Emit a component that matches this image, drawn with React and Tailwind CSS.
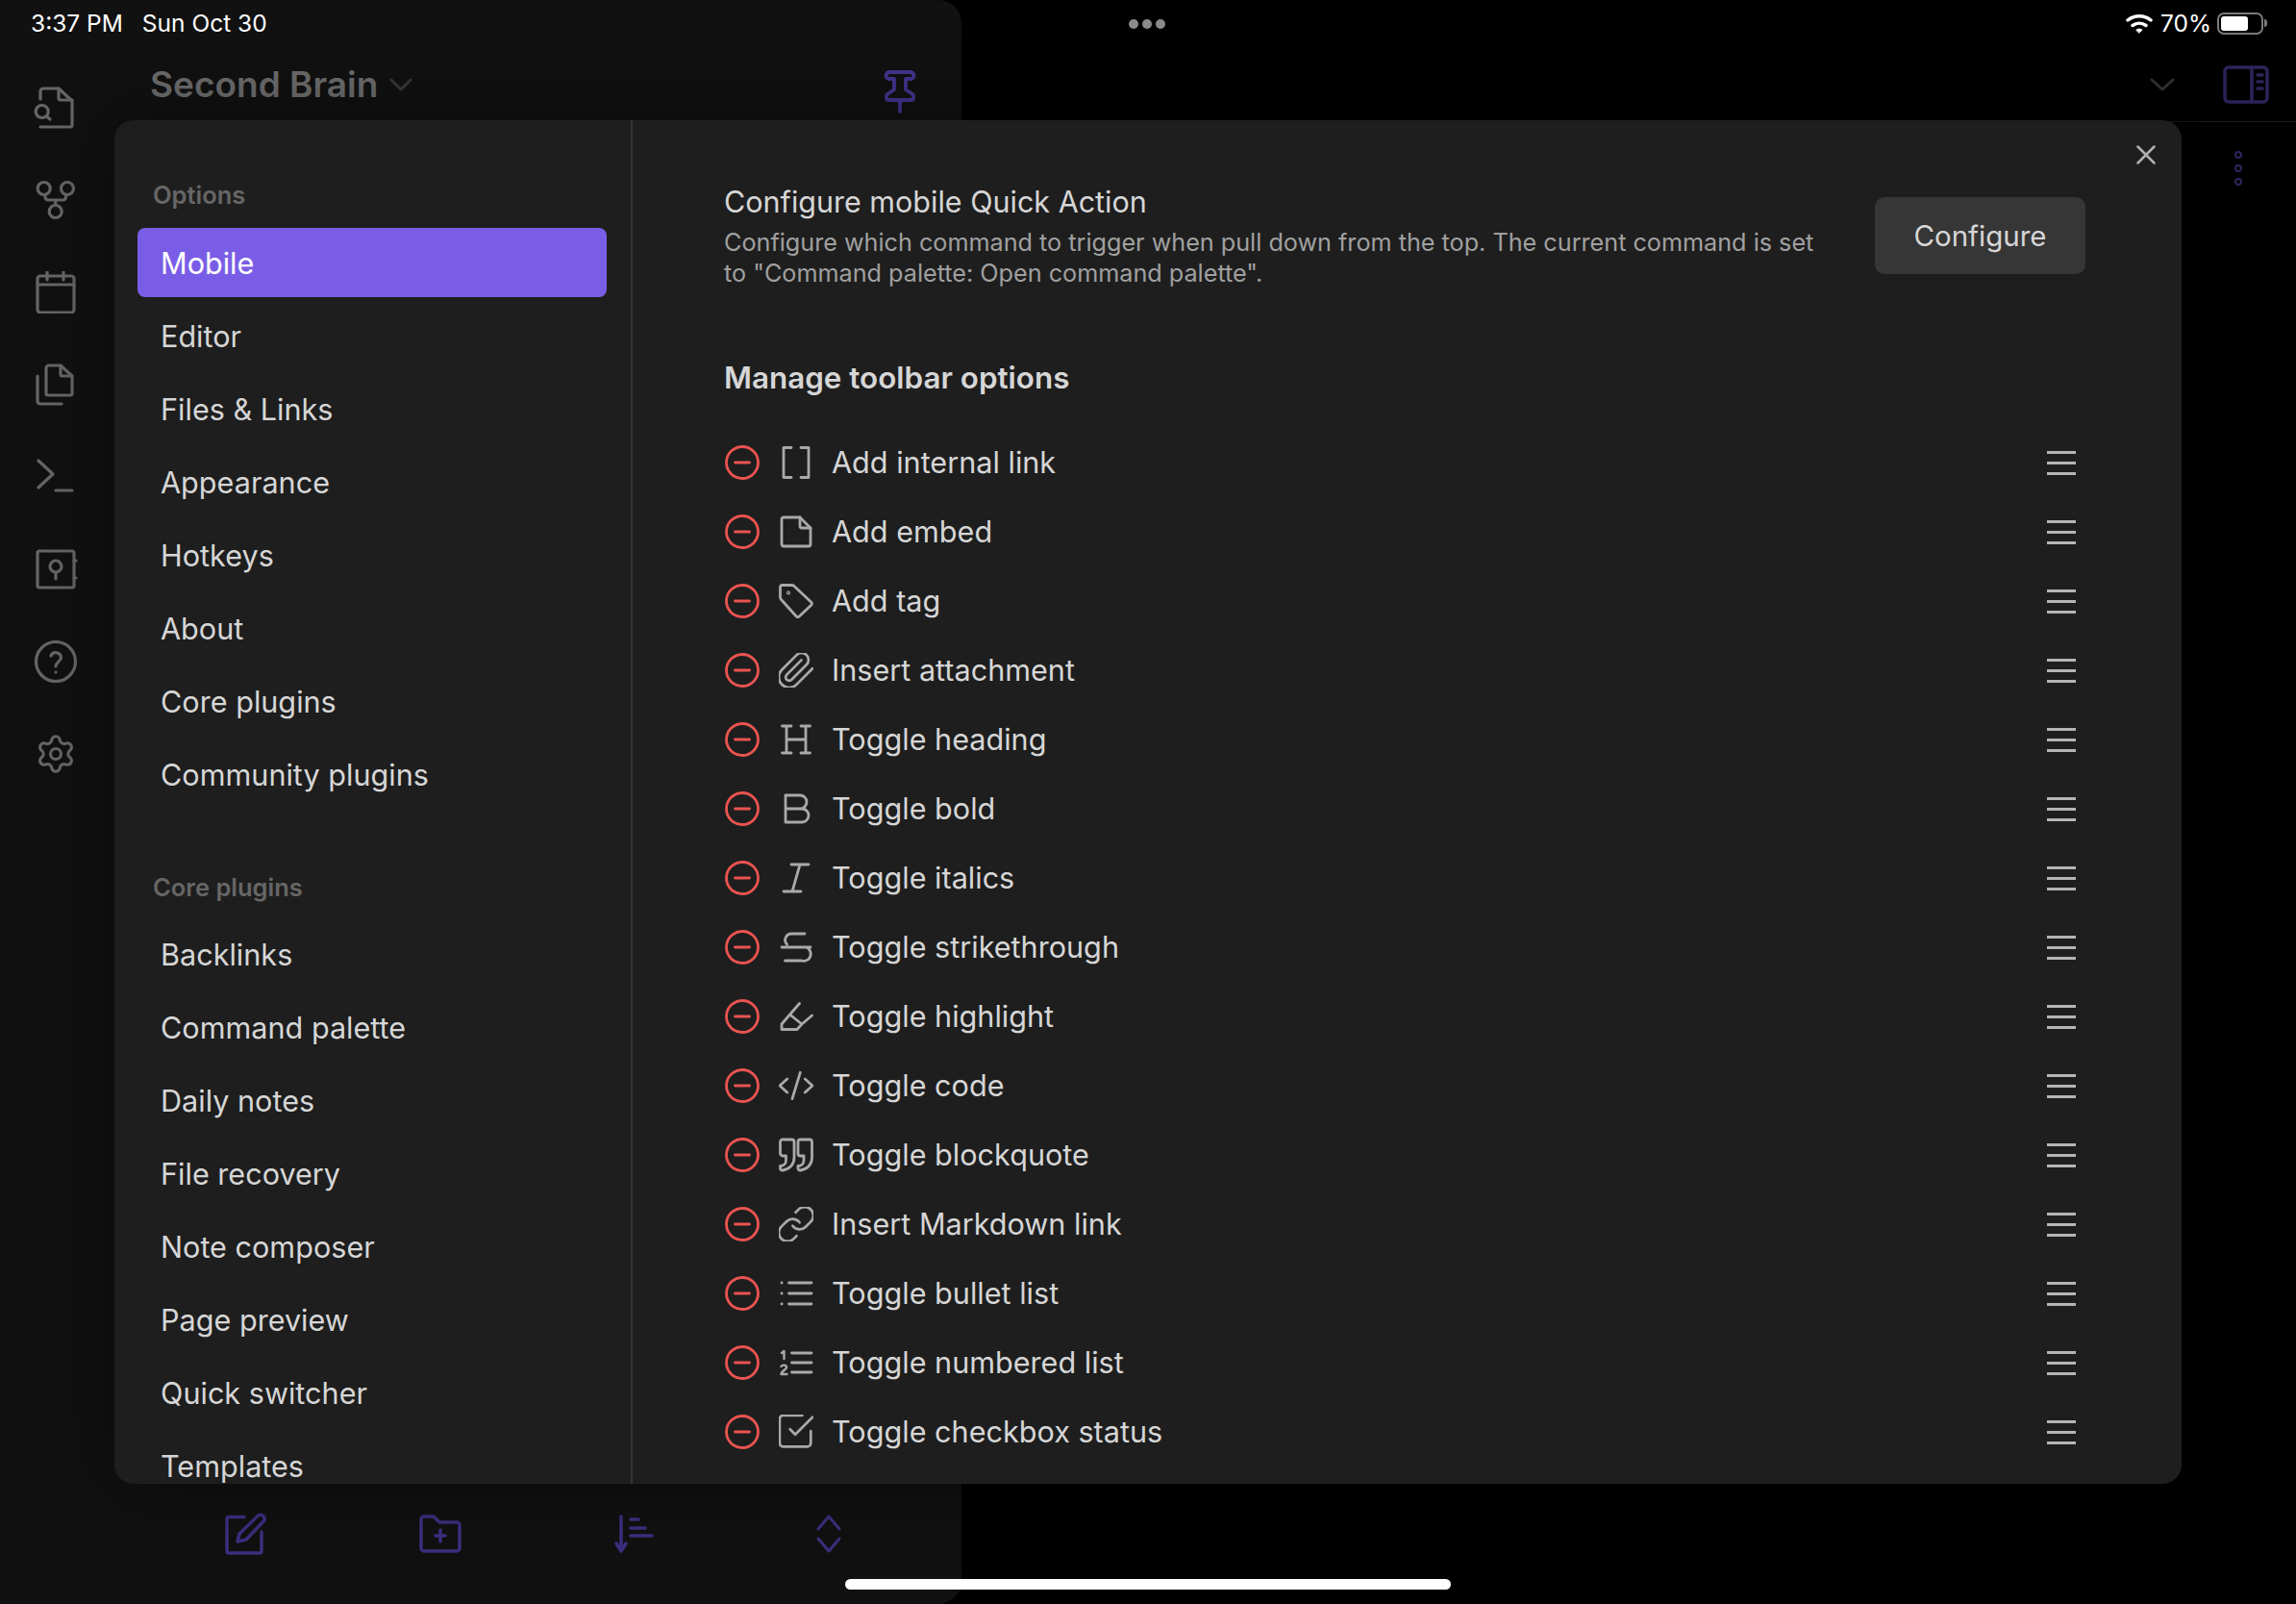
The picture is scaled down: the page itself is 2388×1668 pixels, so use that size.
import { Settings } from "lucide-react";

const general = ["Mobile", "Editor", "Files & Links", "Appearance", "Hotkeys", "About", "Core plugins", "Community plugins"];
const corePlugins = ["Backlinks", "Command palette", "Daily notes", "File recovery", "Note composer", "Page preview", "Quick switcher", "Templates"];

const Ico = ({ w = 36, h = 36, sw = 2.8, className = "", children }) => (
  <svg width={w} height={h} viewBox={`0 0 ${w} ${h}`} fill="none" stroke="currentColor" strokeWidth={sw} strokeLinecap="round" strokeLinejoin="round" className={`shrink-0 ${className}`}>
    {children}
  </svg>
);

// lucide-style paths, cropped so the glyph fills the 36px box
const Lucide24 = ({ box = "2 2 20 20", children }) => (
  <svg width={36} height={36} viewBox={box} fill="none" stroke="currentColor" strokeWidth={1.5} strokeLinecap="round" strokeLinejoin="round" className="shrink-0">
    {children}
  </svg>
);

const tools = [
  { label: "Add internal link", icon: <Ico><path d="M13 2.500H5V33.500H13M23 2.500H31V33.500H23" /></Ico> },
  { label: "Add embed", icon: <Ico><path d="M5 3H22L33 14V31a2 2 0 0 1-2 2H5a2 2 0 0 1-2-2V5a2 2 0 0 1 2-2Z" /><path d="M22 3V12a2 2 0 0 0 2 2H33" /></Ico> },
  { label: "Add tag", icon: <Ico><path d="M3.500 1.500H14a3 3 0 0 1 2 1L33.500 19a2.500 2.500 0 0 1 0 3.500L21.500 33.800a2.500 2.500 0 0 1-3.500 0L2.500 16.500a3 3 0 0 1-1-2V3.500a2 2 0 0 1 2-2Z" /><circle cx="10" cy="9.500" r="0.600" /></Ico> },
  { label: "Insert attachment", icon: <Lucide24><path d="m21.44 11.05-9.19 9.19a6 6 0 0 1-8.49-8.49l8.57-8.57A4 4 0 1 1 18 8.84l-8.59 8.57a2 2 0 0 1-2.83-2.83l8.49-8.48" /></Lucide24> },
  { label: "Toggle heading", icon: <Ico><path d="M3.500 4H13M23 4H32.500M3.500 32H13M23 32H32.500M8 4V32M28 4V32M8 18H28" /></Ico> },
  { label: "Toggle bold", icon: <Ico><path d="M7 4H22a7 7 0 0 1 0 14H7V4ZM7 18H24a7 7 0 0 1 0 14H7V18Z" /></Ico> },
  { label: "Toggle italics", icon: <Ico><path d="M13 4H31M5 32H23M22 4L14 32" /></Ico> },
  { label: "Toggle strikethrough", icon: <Ico><path d="M27 4H13.500a6.500 6.500 0 0 0-5 11M3 18H33M28 18a7 7 0 0 1-4 14H6.500" /></Ico> },
  { label: "Toggle highlight", icon: <Ico><path d="M21.500 4.500L11.500 16L3 26V31.500H19L24 26M11.500 16L24 26L34.500 17" /></Ico> },
  { label: "Toggle code", icon: <Ico><path d="M8.700 11L1 18L8.700 25M22.300 4.300L14 31.700M27.300 11L35 18L27.300 25" /></Ico> },
  { label: "Toggle blockquote", icon: <Ico><path d="M4 2H13.500a2.500 2.500 0 0 1 2.500 2.500V21c0 7-5 12-12 13a2 2 0 0 1-2.500-2V29.500c3 0 6-2 6-6V19H4a2.500 2.500 0 0 1-2.500-2.500V4.500A2.500 2.500 0 0 1 4 2Z" /><path d="M22.500 2H32a2.500 2.500 0 0 1 2.500 2.500V21c0 7-5 12-12 13a2 2 0 0 1-2.500-2V29.500c3 0 6-2 6-6V19h-3.500a2.500 2.500 0 0 1-2.500-2.500V4.500A2.500 2.500 0 0 1 22.500 2Z" /></Ico> },
  { label: "Insert Markdown link", icon: <Lucide24><path d="M10 13a5 5 0 0 0 7.54.54l3-3a5 5 0 0 0-7.07-7.07l-1.72 1.71" /><path d="M14 11a5 5 0 0 0-7.54-.54l-3 3a5 5 0 0 0 7.07 7.07l1.71-1.71" /></Lucide24> },
  { label: "Toggle bullet list", icon: <Ico><path d="M10.500 7H34M10.500 18H34M10.500 29H34M3 7H3.100M3 18H3.100M3 29H3.100" /></Ico> },
  { label: "Toggle numbered list", icon: <Ico><path d="M13.500 8H34M13.500 18H34M13.500 28H34" /><path strokeWidth="2.400" d="M3 8L5.500 6V14M2.500 22c1-2 5.500-2 5.500 1c0 2-5.500 4-5.500 7H8.500" /></Ico> },
  { label: "Toggle checkbox status", icon: <Lucide24 box="2.500 2.500 20 20"><path d="M9 11l3 3L22 4" /><path d="M21 12v7a2 2 0 0 1-2 2H5a2 2 0 0 1-2-2V5a2 2 0 0 1 2-2h11" /></Lucide24> },
];

const RemoveIcon = () => (
  <svg width={36} height={36} viewBox="0 0 36 36" fill="none" stroke="#ea5450" strokeWidth={2.800} strokeLinecap="round" className="shrink-0">
    <circle cx="18" cy="18" r="16.500" />
    <path d="M10.500 18H25.500" />
  </svg>
);

function ToolRow({ label, icon }) {
  return (
    <div className="flex h-[72px] items-center gap-5">
      <RemoveIcon />
      <span className="text-[#a9a9a9]">{icon}</span>
      <span className="-ml-px text-[30.600px] text-[#d6d6d6]">{label}</span>
      <div className="ml-auto mr-[10px] flex w-[30px] flex-col gap-2">
        <div className="h-[3px] bg-[#b5b5b5]" />
        <div className="h-[3px] bg-[#b5b5b5]" />
        <div className="h-[3px] bg-[#b5b5b5]" />
      </div>
    </div>
  );
}

function RailIcons() {
  return (
    <div className="flex w-[116px] shrink-0 flex-col items-center gap-[52px] pt-[90px] text-[#666666]">
      <Ico w={60} h={44} sw={3.200}><path d="M14 13V5a3 3 0 0 1 3-3H33L47 15V40a2 2 0 0 1-2 2H14" /><path d="M33 2V12a2 2 0 0 0 2 2H47" /><circle cx="15.700" cy="26" r="6.500" /><path d="M20.500 31L24 34" /></Ico>
      <Ico w={60} h={44} sw={3.200}><circle cx="17.700" cy="10" r="6.500" /><circle cx="42" cy="10" r="6.500" /><circle cx="29.700" cy="34" r="6.500" /><path d="M19 16.500V19a3 3 0 0 0 3 3H37.500a3 3 0 0 0 3-3V16.500M29.700 22V27.500" /></Ico>
      <Ico w={60} h={44} sw={3.200}><rect x="11" y="5" width="38" height="38" rx="3" /><path d="M11 14H49M21 1V9M38 1V9" /></Ico>
      <Ico w={60} h={44} sw={3.200}><path d="M23 2H35L47 13V31a2 2 0 0 1-2 2H22a2 2 0 0 1-2-2V5a3 3 0 0 1 3-3" /><path d="M35 2V11a2 2 0 0 0 2 2H47" /><path d="M11 13V39a3 3 0 0 0 3 3H36" /></Ico>
      <Ico w={60} h={44} sw={3.200}><path d="M12 5L27 19L12 33M30 36H47" /></Ico>
      <Ico w={60} h={44} sw={3.200}><rect x="11" y="3" width="38" height="38" rx="2" /><path d="M49 13H51M49 31H51" /><circle cx="30" cy="19" r="6" /><path d="M30 25V32" /></Ico>
      <Ico w={60} h={44} sw={3.200}><circle cx="30" cy="22" r="20.500" /><path d="M25 16a5.500 5.500 0 0 1 10.500 2c0 3.500-5.500 4.500-5.500 9M30 33H30.100" /></Ico>
      <Settings size={44} strokeWidth={1.700} className="shrink-0" />
    </div>
  );
}

function BottomBar() {
  return (
    <div className="mt-auto flex gap-[158px] pb-[51px] pl-[118px] text-[#3b3080]">
      <Ico w={44} h={44} sw={3.500}><path d="M20 4.500H4a2 2 0 0 0-2 2V40a2 2 0 0 0 2 2H36a2 2 0 0 0 2-2V20" /><path d="M13 30L15 22L34 3.500C37 1 42 3 41 8L22 28Z" /></Ico>
      <Ico w={44} h={44} sw={3.500}><path d="M5 4H15L21 10H39a3 3 0 0 1 3 3V37a3 3 0 0 1-3 3H5a3 3 0 0 1-3-3V7a3 3 0 0 1 3-3Z" /><path d="M17 24H27M22 18V30" /></Ico>
      <Ico w={44} h={44} sw={3.500}><path d="M8 4V40M3 32L8 40L13 32M18 7H26M18 16H33M18 24H40" /></Ico>
      <Ico w={44} h={44} sw={3}><path d="M11 17L22 4L33 17M11 27L22 40L33 27" /></Ico>
    </div>
  );
}

function NavItem({ label, active }) {
  return (
    <div className={`mb-1 flex h-[72px] items-center rounded-[8px] pl-[24px] pt-[1px] text-[30.600px] ${active ? "bg-[#7a5de6] text-white" : "text-[#d6d6d6]"}`}>
      {label}
    </div>
  );
}

export default function App() {
  return (
    <div className="relative flex h-[1668px] w-[2388px] overflow-hidden bg-black font-['Inter',sans-serif]">
      {/* left pane, dimmed behind the modal */}
      <div className="flex h-full w-[1000px] shrink-0 rounded-r-[24px] bg-[#111111]">
        <RailIcons />
        <div className="flex flex-1 flex-col">
          <div className="flex h-[126px] shrink-0 items-center pl-[40px] pt-[50px]">
            <span className="text-[37px] font-semibold text-[#6b6b6b]">Second Brain</span>
            <Ico w={24} h={14} sw={3} className="ml-[12px] text-[#383838]"><path d="M2 2L12 12L22 2" /></Ico>
            <Ico w={34} h={48} sw={3.800} className="ml-auto mr-[47px] mt-[14px] text-[#41358f]"><path d="M6 4H28a3 3 0 0 1 0 7H23V22L30 27a2 2 0 0 1 1 2V31a2 2 0 0 1-2 2H5a2 2 0 0 1-2-2V29a2 2 0 0 1 1-2L11 22V11H6a3 3 0 0 1 0-7ZM17 33V45" /></Ico>
          </div>
          <BottomBar />
        </div>
      </div>

      {/* right pane */}
      <div className="flex flex-1 flex-col">
        <div className="flex h-[127px] shrink-0 items-center justify-end gap-[50px] border-b border-[#1a1a1a] pr-[28px] pt-[50px] text-[#2b2458]">
          <Ico w={26} h={14} sw={3} className="text-[#333333]"><path d="M2 2L13 12L24 2" /></Ico>
          <Ico w={48} h={40} sw={3.500}><rect x="2" y="2" width="44" height="36" rx="4" /><path d="M30 2V38M36 10H41M36 17H41M36 24H41" /></Ico>
        </div>
        <div className="flex flex-col items-end gap-[6px] pr-[56px] pt-[30px]">
          <div className="h-[8px] w-[8px] rounded-full border-2 border-[#2f2660]" />
          <div className="h-[8px] w-[8px] rounded-full border-2 border-[#2f2660]" />
          <div className="h-[8px] w-[8px] rounded-full border-2 border-[#2f2660]" />
        </div>
      </div>

      {/* status bar */}
      <div className="absolute left-[32px] top-[9px] flex gap-[20px] text-[24.500px] leading-[30px] text-white">
        <span>3:37 PM</span>
        <span>Sun Oct 30</span>
      </div>
      <div className="absolute left-[1174px] top-[20px] flex gap-[4px]">
        <div className="h-[10px] w-[10px] rounded-full bg-[#8a8a8a]" />
        <div className="h-[10px] w-[10px] rounded-full bg-[#8a8a8a]" />
        <div className="h-[10px] w-[10px] rounded-full bg-[#8a8a8a]" />
      </div>
      <div className="absolute right-[30px] top-[9px] flex items-center text-[24.500px] leading-[30px] text-white">
        <Ico w={28} h={22} sw={3.500}><path d="M2 8a19 19 0 0 1 24 0M7 13.500a12 12 0 0 1 14 0" /><path d="M11 18a5 5 0 0 1 6 0L14 21Z" fill="currentColor" strokeWidth={1} /></Ico>
        <span className="ml-[8px]">70%</span>
        <div className="ml-[6px] flex h-[23px] w-[48px] items-center rounded-[7px] border-2 border-[#7a7a7a] p-[2px]">
          <div className="h-full w-[28px] rounded-[3px] bg-white" />
        </div>
        <div className="ml-[1px] h-[8px] w-[3px] rounded-r-full bg-[#7a7a7a]" />
      </div>

      {/* settings modal */}
      <div className="absolute left-[119px] top-[125px] flex h-[1418px] w-[2150px] overflow-hidden rounded-[20px] bg-[#1e1e1e] shadow-[0_0_80px_rgba(0,0,0,0.45)]">
        <div className="w-[539px] shrink-0 overflow-hidden border-r-2 border-[#363636] pl-[24px] pr-[25px] pt-[62px]">
          <div className="mb-[18px] flex h-[32px] items-center pl-[16px] text-[25.500px] font-semibold text-[#666666]">Options</div>
          {general.map((label, i) => <NavItem key={label} label={label} active={i === 0} />)}
          <div className="mb-[17px] mt-[66px] flex h-[32px] items-center pl-[16px] text-[25.500px] font-semibold text-[#666666]">Core plugins</div>
          {corePlugins.map((label) => <NavItem key={label} label={label} />)}
        </div>

        <div className="flex-1 overflow-hidden pl-[96px] pr-[100px] pt-[65px]">
          <div className="flex items-center justify-between">
            <div className="-ml-px w-[1151px]">
              <div className="h-[46px] text-[30.500px] leading-[40px] text-[#d6d6d6]">Configure mobile Quick Action</div>
              <div className="text-[25.200px] leading-[32px] text-[#a0a0a0]">
                Configure which command to trigger when pull down from the top. The current command is set to "Command palette: Open command palette".
              </div>
            </div>
            <div className="flex h-[80px] w-[219px] items-center justify-center rounded-[10px] bg-[#363636] text-[29.500px] text-[#d6d6d6]">Configure</div>
          </div>
          <div className="-ml-px mb-[31px] mt-[74px] flex h-[40px] items-center text-[31.400px] font-semibold text-[#d6d6d6]">Manage toolbar options</div>
          {tools.map((t) => <ToolRow key={t.label} label={t.label} icon={t.icon} />)}
          <div className="flex h-[72px] items-center"><RemoveIcon /></div>
        </div>

        <svg width={20} height={20} viewBox="0 0 20 20" stroke="#b0b0b0" strokeWidth={2.500} strokeLinecap="round" className="absolute right-[27px] top-[26px]">
          <path d="M1.500 1.500L18.500 18.500M18.500 1.500L1.500 18.500" />
        </svg>
      </div>

      {/* home indicator */}
      <div className="absolute bottom-[15px] left-[879px] h-[11px] w-[630px] rounded-full bg-white" />
    </div>
  );
}
